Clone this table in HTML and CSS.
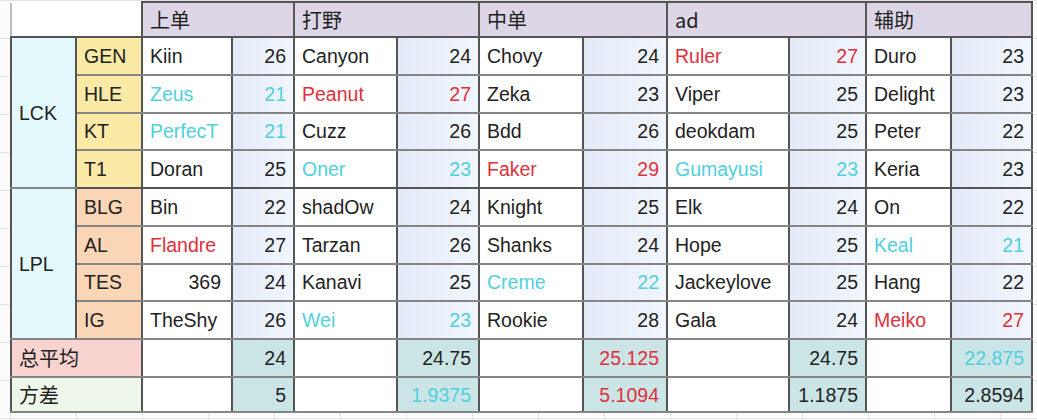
FILE: index.html
```html
<!DOCTYPE html>
<html lang="zh">
<head>
<meta charset="utf-8">
<title>选手年龄表</title>
<link rel="stylesheet" href="styles.css">
</head>
<body>
<div class="sheet">
<table class="grid">
  <colgroup>
    <col class="w1"><col class="w2"><col class="w3"><col class="w4"><col class="w5"><col class="w6">
    <col class="w7"><col class="w8"><col class="w9"><col class="w10"><col class="w11"><col class="w12">
  </colgroup>
  <thead>
    <tr class="head">
      <th colspan="2" class="blank"></th>
      <th colspan="2">上单</th>
      <th colspan="2">打野</th>
      <th colspan="2">中单</th>
      <th colspan="2">ad</th>
      <th colspan="2">辅助</th>
    </tr>
  </thead>
  <tbody>
    <tr>
      <td rowspan="4" class="league">LCK</td>
      <td class="team lck">GEN</td>
      <td class="name">Kiin</td><td class="num">26</td>
      <td class="name">Canyon</td><td class="num">24</td>
      <td class="name">Chovy</td><td class="num">24</td>
      <td class="name red">Ruler</td><td class="num red">27</td>
      <td class="name">Duro</td><td class="num">23</td>
    </tr>
    <tr>
      <td class="team lck">HLE</td>
      <td class="name cyan">Zeus</td><td class="num cyan">21</td>
      <td class="name red">Peanut</td><td class="num red">27</td>
      <td class="name">Zeka</td><td class="num">23</td>
      <td class="name">Viper</td><td class="num">25</td>
      <td class="name">Delight</td><td class="num">23</td>
    </tr>
    <tr>
      <td class="team lck">KT</td>
      <td class="name cyan">PerfecT</td><td class="num cyan">21</td>
      <td class="name">Cuzz</td><td class="num">26</td>
      <td class="name">Bdd</td><td class="num">26</td>
      <td class="name">deokdam</td><td class="num">25</td>
      <td class="name">Peter</td><td class="num">22</td>
    </tr>
    <tr class="group-end">
      <td class="team lck">T1</td>
      <td class="name">Doran</td><td class="num">25</td>
      <td class="name cyan">Oner</td><td class="num cyan">23</td>
      <td class="name red">Faker</td><td class="num red">29</td>
      <td class="name cyan">Gumayusi</td><td class="num cyan">23</td>
      <td class="name">Keria</td><td class="num">23</td>
    </tr>
    <tr>
      <td rowspan="4" class="league">LPL</td>
      <td class="team lpl">BLG</td>
      <td class="name">Bin</td><td class="num">22</td>
      <td class="name">shadOw</td><td class="num">24</td>
      <td class="name">Knight</td><td class="num">25</td>
      <td class="name">Elk</td><td class="num">24</td>
      <td class="name">On</td><td class="num">22</td>
    </tr>
    <tr>
      <td class="team lpl">AL</td>
      <td class="name red">Flandre</td><td class="num">27</td>
      <td class="name">Tarzan</td><td class="num">26</td>
      <td class="name">Shanks</td><td class="num">24</td>
      <td class="name">Hope</td><td class="num">25</td>
      <td class="name cyan">Keal</td><td class="num cyan">21</td>
    </tr>
    <tr>
      <td class="team lpl">TES</td>
      <td class="name right">369</td><td class="num">24</td>
      <td class="name">Kanavi</td><td class="num">25</td>
      <td class="name cyan">Creme</td><td class="num cyan">22</td>
      <td class="name">Jackeylove</td><td class="num">25</td>
      <td class="name">Hang</td><td class="num">22</td>
    </tr>
    <tr>
      <td class="team lpl">IG</td>
      <td class="name">TheShy</td><td class="num">26</td>
      <td class="name cyan">Wei</td><td class="num cyan">23</td>
      <td class="name">Rookie</td><td class="num">28</td>
      <td class="name">Gala</td><td class="num">24</td>
      <td class="name red">Meiko</td><td class="num red">27</td>
    </tr>
    <tr class="summary">
      <td colspan="2" class="label avg">总平均</td>
      <td class="name"></td><td class="stat">24</td>
      <td class="name"></td><td class="stat">24.75</td>
      <td class="name"></td><td class="stat red">25.125</td>
      <td class="name"></td><td class="stat">24.75</td>
      <td class="name"></td><td class="stat cyan">22.875</td>
    </tr>
    <tr class="summary last">
      <td colspan="2" class="label var">方差</td>
      <td class="name"></td><td class="stat">5</td>
      <td class="name"></td><td class="stat cyan">1.9375</td>
      <td class="name"></td><td class="stat red">5.1094</td>
      <td class="name"></td><td class="stat">1.1875</td>
      <td class="name"></td><td class="stat">2.8594</td>
    </tr>
  </tbody>
</table>
</div>
</body>
</html>
```
FILE: styles.css
```css
html, body {
  margin: 0;
  padding: 0;
  background: #ffffff;
}

body {
  width: 1037px;
  height: 420px;
  overflow: hidden;
  font-family: "Liberation Sans", Arial, "Noto Sans CJK SC", sans-serif;
  color: #222222;
  background-color: #fbfbfb;
  background-image:
    linear-gradient(to right, #e2e2e2 1px, transparent 1px),
    linear-gradient(to bottom, #e2e2e2 1px, transparent 1px);
  background-size: 66px 38px, 66px 38px;
  background-position: 10px 0, 0 0;
}

.sheet {
  padding: 1px 0 0 10px;
}

.grid {
  border-collapse: collapse;
  table-layout: fixed;
  width: 1021px;
  font-size: 19.5px;
  background: #ffffff;
}

.w1 { width: 65px; }
.w2 { width: 66px; }
.w3 { width: 90px; }
.w4 { width: 62px; }
.w5 { width: 103px; }
.w6 { width: 82px; }
.w7 { width: 104px; }
.w8 { width: 84px; }
.w9 { width: 122px; }
.w10 { width: 77px; }
.w11 { width: 85px; }
.w12 { width: 81px; }

.grid th,
.grid td {
  border: 2px solid #555555;
  padding: 0 7px;
  height: 35.75px;
  white-space: nowrap;
  overflow: hidden;
  line-height: 22px;
}

.grid td {
  border-top-color: #858585;
  border-bottom-color: #858585;
}

.head th {
  background: #ddd6e6;
  text-align: left;
  font-weight: normal;
  font-family: "Noto Sans CJK SC", sans-serif;
  font-size: 20px;
  height: 32px;
  padding-top: 1px;
  color: #1e1e1e;
}

.head th.blank {
  background: #ffffff;
  border-top-color: #ffffff;
  border-left-color: #bcbcbc;
}

.league {
  background: #e3f8fa;
  text-align: left;
  padding-left: 3px;
  border-left-color: #858585;
}

.team {
  text-align: left;
  padding-left: 6px;
}

.team.lck { background: #fbe9a6; }
.team.lpl { background: #fbd6b6; }

.name {
  background: #ffffff;
  text-align: left;
}

.name.right {
  text-align: right;
  padding-right: 10px;
}

.num {
  background: linear-gradient(to right, #e3ebf8, #f1f5fc);
  text-align: right;
  padding-right: 10px;
}

.stat {
  background: #cbe5e6;
  text-align: right;
  padding-right: 10px;
}

.label {
  font-family: "Noto Sans CJK SC", sans-serif;
  font-size: 20px;
  text-align: left;
  padding-left: 4px;
  border-left-color: #858585;
}

.label.avg { background: #f8d3cf; }
.label.var { background: #eef5e9; }

.summary td { height: 36px; }
.summary.last td { height: 33px; }

.red { color: #e0303c; }
.cyan { color: #4fd0df; }

.group-end td { border-bottom-color: #555555; }
```
